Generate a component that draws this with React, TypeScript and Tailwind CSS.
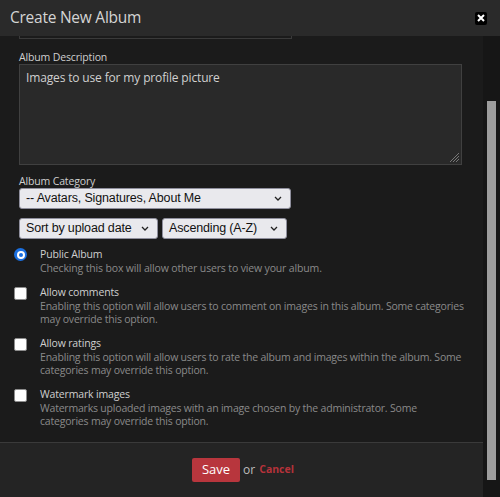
import React from "react";

const options = [
  {
    title: "Allow comments",
    desc: "Enabling this option will allow users to comment on images in this album. Some categories may override this option.",
  },
  {
    title: "Allow ratings",
    desc: "Enabling this option will allow users to rate the album and images within the album. Some categories may override this option.",
  },
  {
    title: "Watermark images",
    desc: "Watermarks uploaded images with an image chosen by the administrator. Some categories may override this option.",
  },
];

function Chevron() {
  return (
    <svg width="8" height="5" viewBox="0 0 8 5" className="shrink-0">
      <path d="M1 1l3 3 3-3" fill="none" stroke="#222" strokeWidth="1.3" />
    </svg>
  );
}

function SelectBox({ label, width }: { label: string; width: string }) {
  return (
    <div
      className={`${width} h-[21px] flex items-center justify-between pl-[6px] pr-[8px] bg-[#e9e9ed] border border-[#8f8f9d] rounded-[3px] text-[12.5px] text-[#111] font-['Liberation_Sans',sans-serif]`}
    >
      <span className="whitespace-nowrap">{label}</span>
      <Chevron />
    </div>
  );
}

export default function App() {
  return (
    <div className="w-[500px] h-[497px] flex flex-col bg-[#1b1b1b] overflow-hidden font-['Open_Sans',sans-serif]">
      {/* Header */}
      <div className="h-[36px] shrink-0 flex items-center justify-between pl-[10px] pr-[13px] bg-[#2a2a2a]">
        <h2 className="text-[15.5px] tracking-[-0.25px] text-[#d4d4d4] leading-none">Create New Album</h2>
        <button className="w-[12px] h-[13px] rounded-[2px] bg-black flex items-center justify-center">
          <svg width="8" height="8" viewBox="0 0 8 8">
            <path d="M1 1l6 6M7 1L1 7" stroke="#fff" strokeWidth="2" />
          </svg>
        </button>
      </div>

      <div className="flex flex-1 min-h-0">
        <div className="flex-1 flex flex-col">
          {/* Body */}
          <div className="flex-1 pl-[19px] pr-[10px] text-[10.5px] tracking-[-0.15px]">
            <div className="w-[273px] h-[3px] border-x border-b border-[#3a3a3a]" />

            <label className="block mt-[12px] leading-[13px] text-[#cfcfcf]">Album Description</label>
            <div className="relative w-[443px] h-[101px] bg-[#292929] border border-[#404040] px-[6px] py-[4px]">
              <span className="text-[12px] text-[#d0d0d0]">Images to use for my profile picture</span>
              <svg width="11" height="11" viewBox="0 0 11 11" className="absolute right-[1px] bottom-[1px]">
                <path d="M10 1L1 10M10 4L4 10M10 7L7 10" stroke="#777" strokeWidth="1" />
              </svg>
            </div>

            <label className="block mt-[10px] leading-[13px] text-[#cfcfcf]">Album Category</label>
            <SelectBox label="-- Avatars, Signatures, About Me" width="w-[272px]" />

            <div className="flex gap-[4px] mt-[9px]">
              <SelectBox label="Sort by upload date" width="w-[139px]" />
              <SelectBox label="Ascending (A-Z)" width="w-[125px]" />
            </div>

            <div className="-ml-[5px] mt-[8px] flex flex-col gap-[10px]">
              <div className="flex gap-[13px]">
                <div className="mt-[1px] w-[13px] h-[13px] shrink-0 rounded-full bg-[#1a6fe0] flex items-center justify-center">
                  <div className="w-[8px] h-[8px] rounded-full bg-white flex items-center justify-center">
                    <div className="w-[4px] h-[4px] rounded-full bg-[#1a6fe0]" />
                  </div>
                </div>
                <div>
                  <div className="leading-[15px] text-[#cfcfcf]">Public Album</div>
                  <div className="leading-[13px] text-[#8a8a8a]">
                    Checking this box will allow other users to view your album.
                  </div>
                </div>
              </div>
              {options.map((o) => (
                <div key={o.title} className="flex gap-[13px]">
                  <div className="mt-[2px] w-[13px] h-[13px] shrink-0 bg-white border border-[#8d8d8d] rounded-[2px]" />
                  <div className="max-w-[425px]">
                    <div className="leading-[15px] text-[#cfcfcf]">{o.title}</div>
                    <div className="leading-[13px] tracking-[-0.2px] text-[#8a8a8a]">{o.desc}</div>
                  </div>
                </div>
              ))}
            </div>
          </div>

          {/* Footer */}
          <div className="h-[55px] shrink-0 border-t border-[#3a3a3a] bg-[#242424] flex items-start justify-center pt-[15px]">
            <div className="flex items-center gap-[3px] ml-[3px]">
              <button className="w-[48px] h-[24px] rounded-[2px] bg-[#b8363d] text-white text-[13px]">Save</button>
              <span className="text-[12px] text-[#bdbdbd]">or</span>
              <a className="text-[10.5px] font-bold text-[#b5323a] ml-[1px]">Cancel</a>
            </div>
          </div>
        </div>

        {/* Scrollbar */}
        <div className="w-[17px] shrink-0 bg-[#161616] pt-[65px] pl-[4px]">
          <div className="w-[9px] h-[379px] bg-[#9d9d9d]" />
        </div>
      </div>
    </div>
  );
}
